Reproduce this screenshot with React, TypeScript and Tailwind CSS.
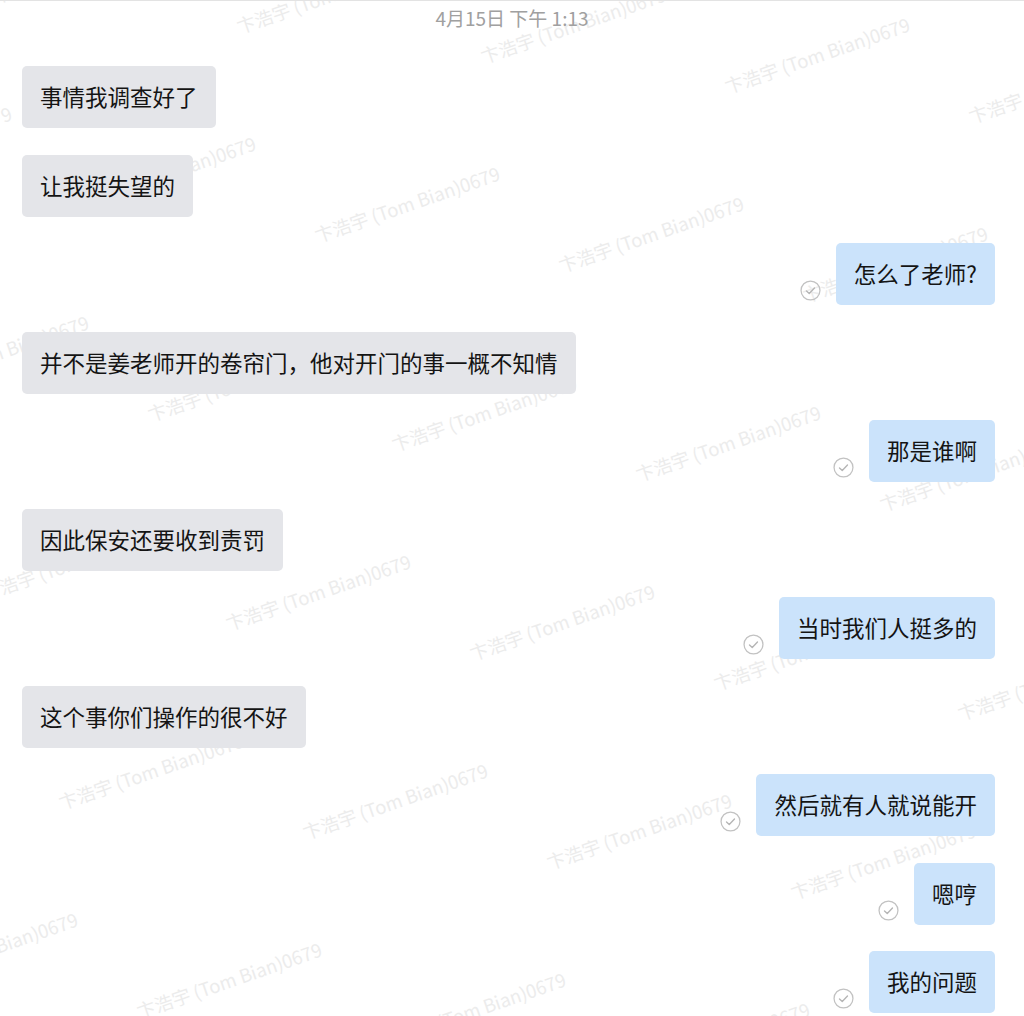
import React from "react";

type Msg = { side: "left" | "right"; text: string };

const messages: Msg[] = [
  { side: "left", text: "事情我调查好了" },
  { side: "left", text: "让我挺失望的" },
  { side: "right", text: "怎么了老师?" },
  { side: "left", text: "并不是姜老师开的卷帘门，他对开门的事一概不知情" },
  { side: "right", text: "那是谁啊" },
  { side: "left", text: "因此保安还要收到责罚" },
  { side: "right", text: "当时我们人挺多的" },
  { side: "left", text: "这个事你们操作的很不好" },
  { side: "right", text: "然后就有人就说能开" },
  { side: "right", text: "嗯哼" },
  { side: "right", text: "我的问题" },
];

// watermark lattice points (baseline start of each label)
const marks: { x: number; y: number }[] = [];
for (let j = -3; j <= 6; j++) {
  for (let i = -4; i <= 6; i++) {
    const x = 240 + 244 * i + 77.5 * j;
    const y = 25 + 30 * i + 209 * j;
    if (x > -260 && x < 1040 && y > -20 && y < 1120) marks.push({ x, y });
  }
}

const SentIcon = () => (
  <svg width="21" height="21" viewBox="0 0 20 20" fill="none" className="shrink-0">
    <circle cx="10" cy="10" r="9" stroke="#c2c2c2" strokeWidth="1.2" />
    <path d="M6.2 10.4 L8.8 12.9 L13.8 7.6" stroke="#b5b5b5" strokeWidth="1.3" strokeLinecap="round" strokeLinejoin="round" />
  </svg>
);

const Bubble = ({ msg }: { msg: Msg }) => {
  if (msg.side === "left") {
    return (
      <div className="flex justify-start">
        <div className="relative z-10 rounded-[5px] bg-[#e4e5e9] px-[18px] pt-[15px] pb-[17px] text-[22.5px] leading-[30px] text-[#141414]">
          {msg.text}
        </div>
      </div>
    );
  }
  return (
    <div className="flex items-end justify-end">
      <div className="relative z-10 mr-[15px] mb-[4px]">
        <SentIcon />
      </div>
      <div className="relative z-10 rounded-[5px] bg-[#cbe3fb] px-[18px] pt-[15px] pb-[17px] text-[22.5px] leading-[30px] text-[#141414]">
        {msg.text}
      </div>
    </div>
  );
};

export default function App() {
  return (
    <div
      className="relative h-[1016px] w-full overflow-hidden border-t border-[#e3e3e3] bg-white"
      style={{ fontFamily: '"Noto Sans CJK SC", "Noto Sans", sans-serif' }}
    >
      <div className="pointer-events-none absolute inset-0 z-0">
        {marks.map((m, k) => (
          <div
            key={k}
            className="absolute whitespace-nowrap text-[18.5px] leading-[18px] text-[#ececec]"
            style={{
              left: m.x,
              top: m.y - 9,
              transform: "rotate(-19deg)",
              transformOrigin: "left bottom",
            }}
          >
            卞浩宇 (Tom Bian)0679
          </div>
        ))}
      </div>

      <div className="relative z-10 flex h-[35px] items-center justify-center text-[19px] text-[#a0a0a0]">
        4月15日 下午 1:13
      </div>

      <div className="flex flex-col gap-[26.5px] pt-[30px] pl-[22px] pr-[29px]">
        {messages.map((m, i) => (
          <Bubble key={i} msg={m} />
        ))}
      </div>
    </div>
  );
}
